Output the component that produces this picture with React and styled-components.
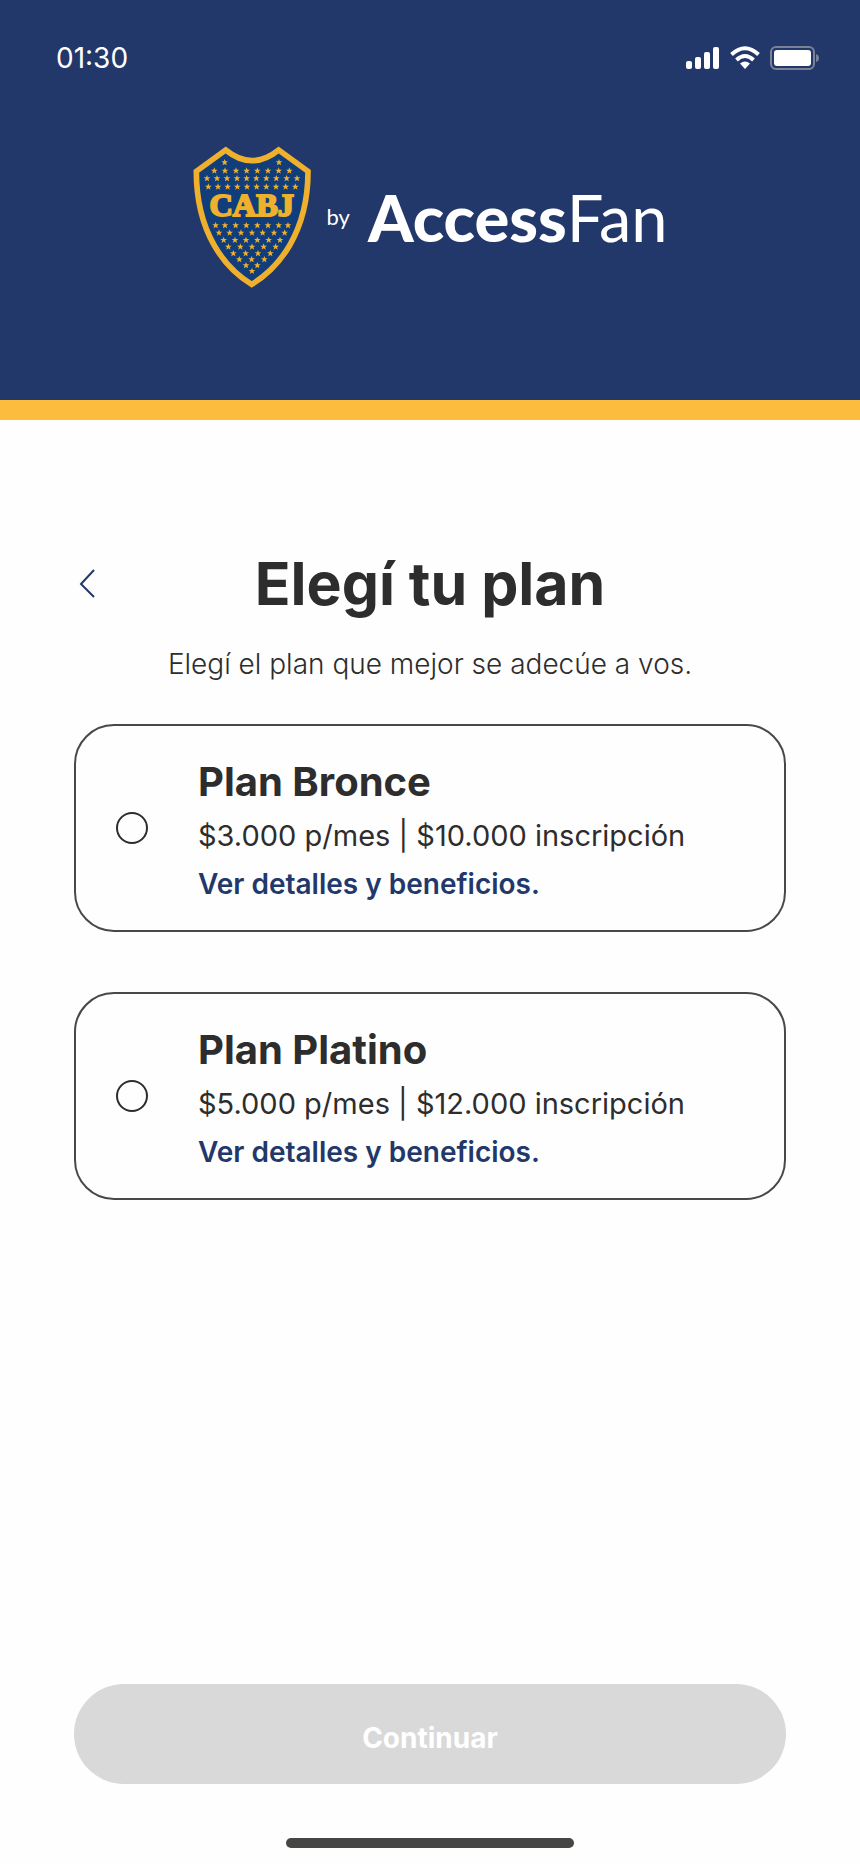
import React, { useState } from "react";
import styled, { createGlobalStyle } from "styled-components";

const GlobalStyle = createGlobalStyle`
  * {
    box-sizing: border-box;
  }
  body {
    margin: 0;
    background: #fefefe;
    color: #2d2d2d;
    font-family: Inter, "Open Sans", sans-serif;
  }
`;

const Page = styled.div`
  min-height: 100vh;
  display: flex;
  flex-direction: column;
`;

const Header = styled.header`
  height: 420px;
  background: #22386a;
  border-bottom: 20px solid #fcbd3e;
`;

const StatusBar = styled.div`
  display: flex;
  justify-content: space-between;
  align-items: center;
  padding: 40px 40px 0 56px;
`;

const Time = styled.span`
  font-size: 28px;
  line-height: 36px;
  color: #fff;
`;

const StatusIcons = styled.svg`
  width: 136px;
  height: 24px;
`;

const Brand = styled.div`
  display: flex;
  justify-content: center;
  align-items: center;
  margin-top: 70px;
  color: #fff;
  font-family: Lato, sans-serif;
`;

const Crest = styled.svg`
  width: 118px;
  height: 142px;
`;

const By = styled.span`
  margin: 0 18px 0 16px;
  font-size: 22px;
  line-height: 24px;
`;

const Wordmark = styled.span`
  font-size: 65px;
  line-height: 64px;
  font-weight: ${(props) => (props.$light ? 400 : 900)};
`;

const Main = styled.main`
  flex: 1;
  display: flex;
  flex-direction: column;
  padding: 128px 74px 16px;
`;

const TitleRow = styled.div`
  display: grid;
  grid-template-columns: 28px 1fr 28px;
  align-items: center;
`;

const BackButton = styled.button`
  display: flex;
  padding: 0;
  border: 0;
  background: none;
  cursor: pointer;
`;

const Title = styled.h1`
  margin: 0;
  text-align: center;
  font-size: 59px;
  line-height: 72px;
  font-weight: 700;
`;

const Subtitle = styled.p`
  margin: 24px 0 40px;
  text-align: center;
  font-size: 28px;
  line-height: 40px;
  font-weight: 300;
`;

const PlanList = styled.div`
  display: flex;
  flex-direction: column;
  gap: 60px;
`;

const PlanCard = styled.div`
  display: flex;
  align-items: center;
  gap: 50px;
  min-height: 208px;
  padding: 0 40px;
  border: 2px solid #484848;
  border-radius: 40px;
`;

const Radio = styled.input`
  appearance: none;
  flex: none;
  width: 32px;
  height: 32px;
  margin: 0;
  border: 2px solid #2d2d2d;
  border-radius: 50%;
  cursor: pointer;

  &:checked {
    background: radial-gradient(#22386a 50%, transparent 55%);
  }
`;

const PlanInfo = styled.div`
  display: flex;
  flex-direction: column;
  align-items: flex-start;
  padding-top: 6px;
`;

const PlanName = styled.label`
  margin-bottom: 2px;
  font-size: 40px;
  line-height: 56px;
  font-weight: 700;
`;

const PlanPrice = styled.span`
  font-size: 29px;
  line-height: 48px;
`;

const PlanLink = styled.a`
  font-size: 28px;
  line-height: 48px;
  font-weight: 600;
  color: #22386a;
  text-decoration: none;
`;

const ContinueButton = styled.button`
  width: 100%;
  height: 100px;
  margin-top: auto;
  padding: 8px 0 0;
  border: 0;
  border-radius: 50px;
  background: #d9d9d9;
  color: #fff;
  font-family: inherit;
  font-size: 28px;
  font-weight: 700;
`;

const HomeIndicator = styled.div`
  width: 288px;
  height: 10px;
  margin: 54px auto 0;
  border-radius: 5px;
  background: #464744;
`;

// [y, ...x] for each row of stars
const starRows = [
  [85, 137, 300],
  [110, 106, 138, 171, 203, 235, 267, 299, 331],
  [133, 84, 114, 144, 174, 203, 232, 262, 292, 323, 354],
  [158, 88, 117, 146, 175, 204, 233, 262, 291, 320, 349],
  [274, 110, 138, 170, 202, 235, 267, 299, 327],
  [296, 120, 152, 186, 219, 251, 285, 317],
  [318, 134, 168, 201, 235, 269, 303],
  [338, 148, 184, 219, 254, 290],
  [358, 163, 200, 237, 274],
  [376, 181, 218, 256],
  [394, 201, 235],
  [411, 219],
];

const plans = [
  { id: "bronce", name: "Plan Bronce", price: "$3.000 p/mes | $10.000 inscripción" },
  { id: "platino", name: "Plan Platino", price: "$5.000 p/mes | $12.000 inscripción" },
];

const CrestLogo = () => (
  <Crest viewBox="42 36 354 426">
    <path
      d="M140 48Q219 112 299 48L387 112C387 300 296 404 218 451C140 404 52 300 52 112Z"
      fill="#113e7a"
      stroke="#efb02d"
      strokeWidth="17"
    />
    {starRows.map(([y, ...xs]) =>
      xs.map((x) => (
        <path
          key={`${x}-${y}`}
          transform={`translate(${x} ${y})`}
          d="M0-10L2.700-3H10L4.200 1.600L6.400 9L0 4.700L-6.400 9L-4.200 1.600L-10-3H-2.700Z"
          fill="#efb02d"
        />
      ))
    )}
    <text
      x="218"
      y="246"
      textAnchor="middle"
      fontFamily="Liberation Serif, serif"
      fontWeight="700"
      fontSize="97"
      fill="#efb02d"
      stroke="#efb02d"
      strokeWidth="6"
    >
      CABJ
    </text>
  </Crest>
);

const Status = () => (
  <StatusIcons viewBox="0 0 136 24" fill="#fff">
    <rect x="2" y="15" width="6" height="8" rx="2" />
    <rect x="11" y="11" width="6" height="12" rx="2" />
    <rect x="20" y="6" width="6" height="17" rx="2" />
    <rect x="29" y="1" width="6" height="22" rx="2" />
    <g fill="none" stroke="#fff" strokeWidth="4">
      <path d="M47.500 8.500Q61-4 74.500 8.500" />
      <path d="M52.500 14Q61 6 69.500 14" />
    </g>
    <path d="M56 17.500Q61 13.500 66 17.500L61 23Z" />
    <rect x="87" y="1" width="43" height="22" rx="5" fill="none" stroke="#7a8298" strokeWidth="2" />
    <rect x="90" y="4" width="37" height="16" rx="3" />
    <path d="M132 8Q135 9 135 12Q135 15 132 16Z" fill="#7a8298" />
  </StatusIcons>
);

const App = () => {
  const [selected, setSelected] = useState("");

  return (
    <Page>
      <GlobalStyle />
      <Header>
        <StatusBar>
          <Time>01:30</Time>
          <Status />
        </StatusBar>
        <Brand>
          <CrestLogo />
          <By>by</By>
          <Wordmark>Access</Wordmark>
          <Wordmark $light>Fan</Wordmark>
        </Brand>
      </Header>
      <Main>
        <TitleRow>
          <BackButton aria-label="Volver">
            <svg width="28" height="32" viewBox="0 0 28 32" fill="none" stroke="#22386a" strokeWidth="2">
              <path d="M20 2L7 16L20 29" />
            </svg>
          </BackButton>
          <Title>Elegí tu plan</Title>
        </TitleRow>
        <Subtitle>Elegí el plan que mejor se adecúe a vos.</Subtitle>
        <PlanList>
          {plans.map((plan) => (
            <PlanCard key={plan.id}>
              <Radio
                type="radio"
                name="plan"
                id={plan.id}
                checked={selected === plan.id}
                onChange={() => setSelected(plan.id)}
              />
              <PlanInfo>
                <PlanName htmlFor={plan.id}>{plan.name}</PlanName>
                <PlanPrice>{plan.price}</PlanPrice>
                <PlanLink href={`#${plan.id}`}>Ver detalles y beneficios.</PlanLink>
              </PlanInfo>
            </PlanCard>
          ))}
        </PlanList>
        <ContinueButton disabled={!selected}>Continuar</ContinueButton>
        <HomeIndicator />
      </Main>
    </Page>
  );
};

export default App;
